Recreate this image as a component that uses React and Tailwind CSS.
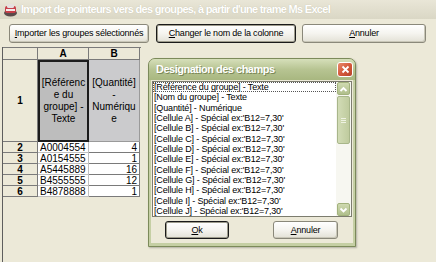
import React from "react";

function AppIcon() {
  return (
    <svg width="15" height="14" viewBox="0 0 15 14" className="shrink-0">
      <ellipse cx="7.5" cy="10" rx="6.5" ry="3.5" fill="#5a4a4a" />
      <rect x="2" y="3" width="11" height="7" rx="2" fill="#c8404a" />
      <rect x="4" y="1" width="7" height="4" rx="1.5" fill="#e6e0e0" />
      <rect x="3" y="6" width="9" height="2" fill="#f4eaea" />
    </svg>
  );
}

function XpButton({ children, w, dark = false }) {
  return (
    <div
      className={`h-full flex items-center justify-center rounded-[3px] bg-gradient-to-b from-[#ffffff] via-[#f5f4ef] to-[#e3e1d6] text-[9px] tracking-[-0.2px] leading-none whitespace-nowrap ${
        dark
          ? "border border-[#1a1a1a] shadow-[inset_0_0_0_1px_#9e9c8c]"
          : "border border-[#8a887a] shadow-[inset_-1px_-1px_0_#c9c7b8]"
      }`}
      style={{ width: w }}
    >
      {children}
    </div>
  );
}

function Cell({ className = "", children }) {
  return <div className={`flex items-center text-[10px] leading-[11px] ${className}`}>{children}</div>;
}

const rows = [
  ["2", "A0004554", "4"],
  ["3", "A0154555", "1"],
  ["4", "A5445889", "16"],
  ["5", "B4555555", "12"],
  ["6", "B4878888", "1"],
];

const items = [
  "[Référence du groupe] - Texte",
  "[Nom du groupe] - Texte",
  "[Quantité] - Numérique",
  "[Cellule A] - Spécial ex:'B12=7,30'",
  "[Cellule B] - Spécial ex:'B12=7,30'",
  "[Cellule C] - Spécial ex:'B12=7,30'",
  "[Cellule D] - Spécial ex:'B12=7,30'",
  "[Cellule E] - Spécial ex:'B12=7,30'",
  "[Cellule F] - Spécial ex:'B12=7,30'",
  "[Cellule G] - Spécial ex:'B12=7,30'",
  "[Cellule H] - Spécial ex:'B12=7,30'",
  "[Cellule I] - Spécial ex:'B12=7,30'",
  "[Cellule J] - Spécial ex:'B12=7,30'",
];

function Chevron({ up }) {
  return (
    <svg width="9" height="6" viewBox="0 0 9 6">
      <path
        d={up ? "M1.5 5 L4.5 2 L7.5 5" : "M1.5 1.5 L4.5 4.5 L7.5 1.5"}
        stroke="#ffffff"
        strokeWidth="1.8"
        fill="none"
      />
    </svg>
  );
}

export default function App() {
  return (
    <div className="relative w-[436px] h-[262px] overflow-hidden bg-[#ece9d8] font-['Liberation_Sans',Arial,sans-serif] text-black flex flex-col">
      {/* Title bar */}
      <div className="h-[19px] shrink-0 flex items-center gap-[3px] pl-[3px] bg-gradient-to-b from-[#e9e6d7] to-[#dad7c5]">
        <AppIcon />
        <span className="text-[11px] font-bold tracking-[-0.7px] text-white whitespace-nowrap [text-shadow:0_0_1px_#bcb8a2]">
          Import de pointeurs vers des groupes, à partir d'une trame Ms Excel
        </span>
      </div>

      {/* Button row */}
      <div className="h-[28px] shrink-0 pt-[5px] pb-[4px] pl-[9px] flex">
        <XpButton w={140}>
          <span><u>I</u>mporter les groupes sélectionnés</span>
        </XpButton>
        <div className="w-[7px]" />
        <XpButton w={140} dark>
          <span><u>C</u>hanger le nom de la colonne</span>
        </XpButton>
        <div className="w-[6px]" />
        <XpButton w={124}>
          <span><u>A</u>nnuler</span>
        </XpButton>
      </div>

      {/* Grid */}
      <div className="flex-1 ml-[2px] border-l border-[#5e5e5e] flex flex-col">
        {/* header */}
        <div className="flex h-[13px] border-t border-[#7a7a7a] w-[138px]">
          <Cell className="w-[35px] border-r border-b border-[#7a7a7a]" />
          <Cell className="w-[51px] border-r border-b border-[#7a7a7a] justify-center font-bold">A</Cell>
          <Cell className="w-[51px] border-r border-b border-[#7a7a7a] justify-center font-bold">B</Cell>
        </div>
        {/* row 1 */}
        <div className="flex h-[82px]">
          <Cell className="w-[35px] border-r border-b border-[#7a7a7a] justify-center font-bold">1</Cell>
          <div className="w-[51px] bg-[#bdbdbd] border-2 border-[#1c1c1c] flex items-center justify-center text-center text-[10px] leading-[12px]">
            <span>
              [Référenc
              <br />e du
              <br />groupe] -
              <br />Texte
            </span>
          </div>
          <div className="w-[51px] bg-[#cbcbcd] border-r border-b border-[#9a9a9a] flex items-center justify-center text-center text-[10px] leading-[12px]">
            <span>
              [Quantité]
              <br />-
              <br />Numériqu
              <br />e
            </span>
          </div>
        </div>
        {rows.map(([n, a, b]) => (
          <div key={n} className="flex h-[11px]">
            <Cell className="w-[35px] border-r border-b border-[#7a7a7a] justify-center font-bold bg-[#ece9d8]">{n}</Cell>
            <Cell className="w-[51px] bg-white border-r border-b border-[#c0c0c0] pl-[2px]">{a}</Cell>
            <Cell className="w-[51px] bg-white border-r border-b border-[#7a7a7a] justify-end pr-[2px]">{b}</Cell>
          </div>
        ))}
      </div>

      {/* Dialog */}
      <div className="absolute left-[148px] top-[58px] w-[208px] h-[189px] rounded-t-[7px] border border-[#7c8a5a] bg-[#c5cfa4] flex flex-col shadow-[1px_1px_2px_rgba(0,0,0,0.25)]">
        <div className="h-[21px] shrink-0 rounded-t-[6px] bg-gradient-to-b from-[#d6dfba] via-[#b7c492] to-[#a8b780] flex items-center justify-between pl-[7px] pr-[2px]">
          <span className="text-[11px] font-bold tracking-[-0.5px] text-white whitespace-nowrap [text-shadow:1px_1px_0_#7b8857]">
            Designation des champs
          </span>
          <div className="w-[16px] h-[15px] rounded-[3px] border border-white bg-gradient-to-br from-[#e88a6c] via-[#d4593b] to-[#b8432a] flex items-center justify-center">
            <svg width="9" height="9" viewBox="0 0 9 9">
              <path d="M1.5 1.5 L7.5 7.5 M7.5 1.5 L1.5 7.5" stroke="#ffffff" strokeWidth="1.8" />
            </svg>
          </div>
        </div>
        <div className="flex-1 mx-[2px] mb-[3px] bg-[#ece9d8] flex flex-col pt-[1px] pl-[1px]">
          {/* listbox */}
          <div className="h-[136px] w-[200px] border border-[#7c7c6e] bg-white flex">
            <div className="flex-1 flex flex-col text-[9px] leading-[10.33px] tracking-[-0.15px] whitespace-nowrap">
              {items.map((t, i) => (
                <div
                  key={t}
                  className={`h-[10.33px] pl-[1px] ${i === 0 ? "outline outline-1 outline-dotted outline-[#555] -outline-offset-1" : ""}`}
                >
                  {t}
                </div>
              ))}
            </div>
            <div className="w-[15px] bg-[#f7f7f1] flex flex-col py-[0px] px-[1px]">
              <div className="h-[13px] rounded-[2px] bg-gradient-to-b from-[#cfdab0] to-[#b0bf8c] border border-[#a2b27c] flex items-center justify-center">
                <Chevron up />
              </div>
              <div className="h-[48px] mt-[1px] rounded-[2px] bg-gradient-to-r from-[#d2dcb6] to-[#bfcb9e] border border-[#a8b68a] flex flex-col items-center justify-center gap-[1px]">
                <div className="w-[5px] h-[1px] bg-[#eef2e2]" />
                <div className="w-[5px] h-[1px] bg-[#eef2e2]" />
                <div className="w-[5px] h-[1px] bg-[#eef2e2]" />
              </div>
              <div className="flex-1" />
              <div className="h-[13px] rounded-[2px] bg-gradient-to-b from-[#cfdab0] to-[#b0bf8c] border border-[#a2b27c] flex items-center justify-center">
                <Chevron />
              </div>
            </div>
          </div>
          {/* buttons */}
          <div className="flex mt-[4px] pl-[13px] h-[18px]">
            <XpButton w={64} dark>
              <span className="text-[9px]"><u>O</u>k</span>
            </XpButton>
            <div className="w-[44px]" />
            <XpButton w={65}>
              <span className="text-[9px]"><u>A</u>nnuler</span>
            </XpButton>
          </div>
        </div>
      </div>
    </div>
  );
}
